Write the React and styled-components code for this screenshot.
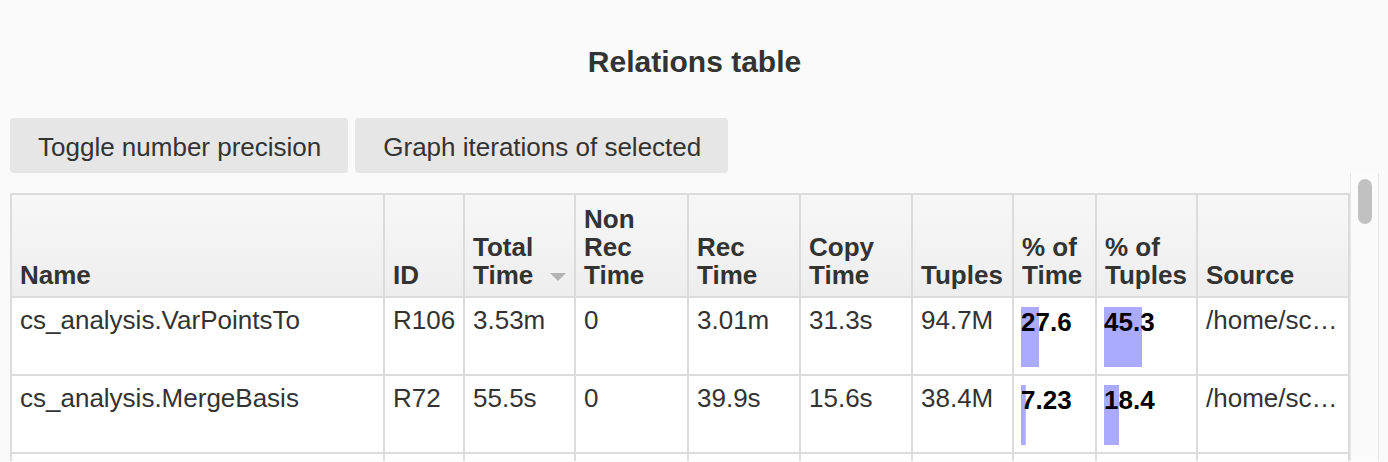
import React from 'react';
import styled, { createGlobalStyle } from 'styled-components';

const GlobalStyle = createGlobalStyle`
	html, body {
		margin: 0;
		padding: 0;
		background: #fafafa;
		overflow: hidden;
	}
	body {
		font-family: 'Liberation Sans', Arial, Helvetica, sans-serif;
		color: #333;
	}
`;

const columns = [
	{ key: 'name', label: 'Name', width: 373 },
	{ key: 'id', label: 'ID', width: 80 },
	{ key: 'total', label: 'Total Time', width: 111, sorted: true },
	{ key: 'nonRec', label: 'Non Rec Time', width: 113 },
	{ key: 'rec', label: 'Rec Time', width: 112 },
	{ key: 'copy', label: 'Copy Time', width: 112 },
	{ key: 'tuples', label: 'Tuples', width: 101 },
	{ key: 'pctTime', label: '% of Time', width: 83, bar: true },
	{ key: 'pctTuples', label: '% of Tuples', width: 101, bar: true },
	{ key: 'source', label: 'Source', width: 152, clip: true },
];

const SOURCE = '/home/scholz/doop/souffle-logic/analyses/context-sensitive.dl';

const rows = [
	['cs_analysis.VarPointsTo', 'R106', '3.53m', '0', '3.01m', '31.3s', '94.7M', 27.6, 45.3, SOURCE],
	['cs_analysis.MergeBasis', 'R72', '55.5s', '0', '39.9s', '15.6s', '38.4M', 7.23, 18.4, SOURCE],
	['cs_analysis.CallGraphEdge', 'R41', '21.8s', '0', '17.2s', '4.61s', '9.12M', 2.84, 4.35, SOURCE],
];

const Page = styled.div`
	padding: 0 9px 0 10px;
`;

const Title = styled.h3`
	margin: 0;
	padding: 44px 0 38px;
	font-size: 30px;
	line-height: 36px;
	font-weight: bold;
	text-align: center;
	color: #333;
`;

const Toolbar = styled.div`
	display: flex;
	gap: 7px;
`;

const Button = styled.button`
	height: 55px;
	padding: 3px 27px 0 28px;
	border: none;
	border-radius: 4px;
	background: #e6e6e6;
	color: #333;
	font-family: inherit;
	font-size: 26px;
	cursor: pointer;
`;

const Frame = styled.div`
	display: flex;
	height: 288px;
`;

const ScrollArea = styled.div`
	flex: 1;
	overflow: hidden;
	padding-top: 20px;
`;

const Track = styled.div`
	width: 27px;
	flex: none;
	background: #fbfbfb;
	border-left: 1px solid #e6e6e6;
	border-right: 1px solid #e6e6e6;
`;

const Thumb = styled.div`
	height: 45px;
	margin: 6px 6px 0 7px;
	border-radius: 8px;
	background: #c1c1c1;
`;

const Table = styled.table`
	width: 1338px;
	table-layout: fixed;
	border-collapse: collapse;
	border: 2px solid #dcdcdc;
	background: #fff;
	font-size: 26px;
`;

const HeadCell = styled.th`
	position: relative;
	padding: 9px 8px 7px;
	height: 85px;
	border: 2px solid #dcdcdc;
	background: linear-gradient(#f7f7f7, #eeeeee);
	text-align: left;
	vertical-align: bottom;
	font-weight: bold;
	line-height: 28px;
	color: #333;

	${(p) =>
		p.$sorted &&
		`
		&::after {
			content: '';
			position: absolute;
			right: 8px;
			bottom: 15px;
			border-left: 8px solid transparent;
			border-right: 8px solid transparent;
			border-top: 8px solid #b3b3b3;
		}
	`}
`;

const Cell = styled.td`
	padding: 7px 8px 0;
	height: 69px;
	border: 2px solid #dcdcdc;
	vertical-align: top;
	line-height: 30px;
	color: #333;
	white-space: nowrap;
	overflow: hidden;
	text-overflow: ${(p) => (p.$clip ? 'ellipsis' : 'clip')};
`;

const Bar = styled.div`
	height: 60px;
	margin: 2px 0 0 -1px;
	font-weight: bold;
	color: #000;
	background-image: linear-gradient(#aaaaff, #aaaaff);
	background-repeat: no-repeat;
	background-size: ${(p) => p.$pct}% 100%;
`;

const App = () => {
	return (
		<>
			<GlobalStyle />
			<Page>
				<Title>Relations table</Title>
				<Toolbar>
					<Button>Toggle number precision</Button>
					<Button>Graph iterations of selected</Button>
				</Toolbar>
				<Frame>
					<ScrollArea>
						<Table>
							<colgroup>
								{columns.map((c) => (
									<col key={c.key} style={{ width: c.width }} />
								))}
							</colgroup>
							<thead>
								<tr>
									{columns.map((c) => (
										<HeadCell key={c.key} $sorted={c.sorted}>
											{c.label}
										</HeadCell>
									))}
								</tr>
							</thead>
							<tbody>
								{rows.map((r) => (
									<tr key={r[1]}>
										{r.map((v, i) =>
											columns[i].bar ? (
												<Cell key={i}>
													<Bar $pct={v}>{v}</Bar>
												</Cell>
											) : (
												<Cell key={i} $clip={columns[i].clip}>
													{v}
												</Cell>
											),
										)}
									</tr>
								))}
							</tbody>
						</Table>
					</ScrollArea>
					<Track>
						<Thumb />
					</Track>
				</Frame>
			</Page>
		</>
	);
};

export default App;
